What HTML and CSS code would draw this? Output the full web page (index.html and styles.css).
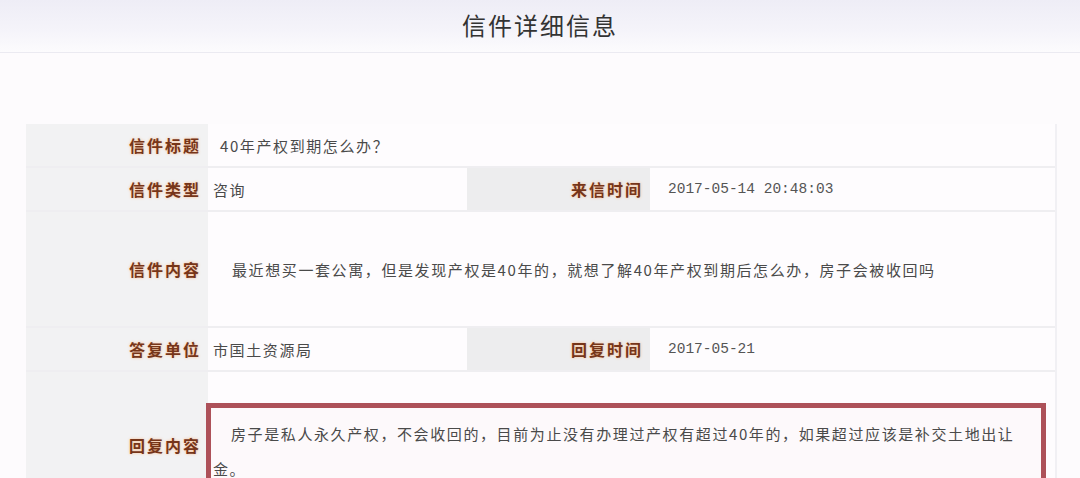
FILE: index.html
```html
<!DOCTYPE html>
<html>
<head>
    <meta charset="UTF-8">
    <title>信件详细信息</title>
    <link rel="stylesheet" href="styles.css">
</head>
<body>
    <div class="page-header">
        <h1>信件详细信息</h1>
    </div>

    <div class="letter-table">
        <div class="cell label">信件标题</div>
        <div class="cell value span-3 title-value">40年产权到期怎么办？</div>

        <div class="cell label">信件类型</div>
        <div class="cell value">咨询</div>
        <div class="cell label mid-label">来信时间</div>
        <div class="cell value date">2017-05-14 20:48:03</div>

        <div class="cell label tall">信件内容</div>
        <div class="cell value span-3 tall indent">最近想买一套公寓，但是发现产权是40年的，就想了解40年产权到期后怎么办，房子会被收回吗</div>

        <div class="cell label">答复单位</div>
        <div class="cell value">市国土资源局</div>
        <div class="cell label mid-label">回复时间</div>
        <div class="cell value date">2017-05-21</div>

        <div class="cell label reply-label">回复内容</div>
        <div class="cell value span-3 reply-cell">
            <div class="reply-box">房子是私人永久产权，不会收回的，目前为止没有办理过产权有超过40年的，如果超过应该是补交土地出让金。</div>
        </div>
    </div>
</body>
</html>
```

FILE: styles.css
```css
body {
    margin: 0;
    background-color: #fdfbfd;
    font-family: "Noto Sans CJK SC", "Liberation Sans", sans-serif;
    color: #4a4a4a;
}
.page-header {
    height: 52px;
    background: linear-gradient(to bottom, #eeedf6, #f5f4fa 60%, #fcfbfd);
    border-bottom: 1px solid #ebeaf1;
    text-align: center;
}
.page-header h1 {
    margin: 0;
    padding-top: 8px;
    font-size: 24px;
    font-weight: normal;
    letter-spacing: 2px;
    line-height: 34px;
    color: #333;
}
.letter-table {
    display: grid;
    grid-template-columns: 182px 259px 183px 1fr;
    row-gap: 2px;
    width: 1029px;
    margin: 71px 0 0 26px;
    background-color: #efeef1;
    border-right: 2px solid #f1f0f4;
}
.cell {
    display: flex;
    align-items: center;
    min-height: 42px;
    font-size: 15px;
    letter-spacing: 1.6px;
}
.label {
    justify-content: flex-end;
    padding-right: 7px;
    background-color: #f2f2f3;
    font-size: 16px;
    font-weight: bold;
    letter-spacing: 2px;
    color: #763519;
    text-shadow: 0 0 3px #f8bb8c;
}
.mid-label {
    background-color: #ededee;
}
.value {
    padding-left: 5px;
    background-color: #fefcfe;
}
.span-3 {
    grid-column: span 3;
}
.title-value {
    padding-left: 12px;
}
.date {
    padding-left: 18px;
    font-family: "Liberation Mono", monospace;
    font-size: 14.5px;
    letter-spacing: 0;
    color: #555;
}
.tall {
    min-height: 114px;
}
.indent {
    padding-left: 24px;
}
.reply-label {
    min-height: 146px;
}
.reply-cell {
    align-items: flex-start;
    padding: 31px 9px 0 0;
}
.reply-box {
    box-sizing: border-box;
    width: 840px;
    margin-left: -2px;
    padding: 8px 10px 14px 2px;
    border: 5px solid #ad5159;
    text-indent: 18px;
    line-height: 35px;
    background-color: #fdf9fb;
}
```
